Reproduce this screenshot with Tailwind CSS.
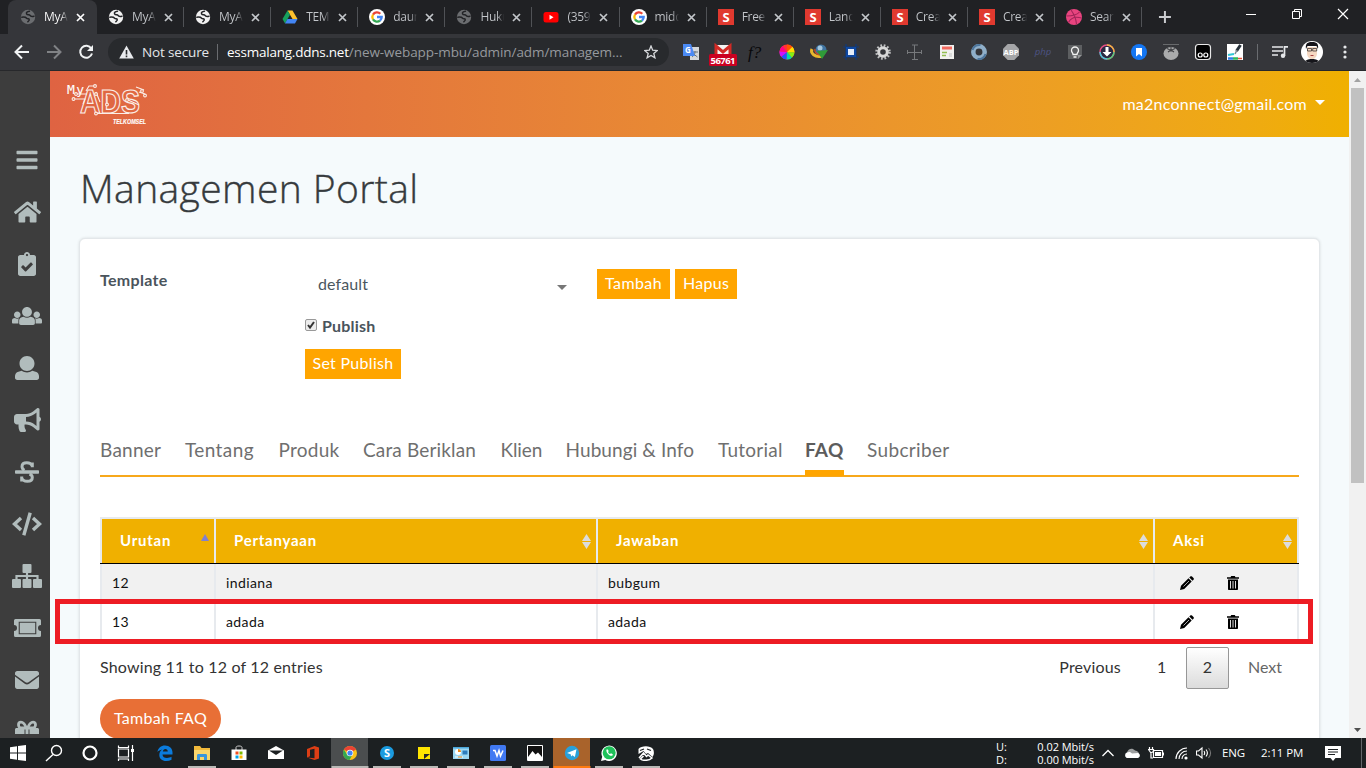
<!DOCTYPE html>
<html lang="id">
<head>
<meta charset="utf-8">
<title>MyAds - Managemen Portal</title>
<script src="https://cdn.jsdelivr.net/npm/@tailwindcss/browser@4"></script>
</head>
<body class="w-[1366px] h-[768px] overflow-hidden flex flex-col font-['Lato',sans-serif] bg-[#f5fafc]">

<!-- shared symbols -->
<svg width="0" height="0" class="absolute">
  <symbol id="globe" viewBox="0 0 16 16"><circle cx="8" cy="8" r="7.200" fill="currentColor"/><path d="M1.800 8.200c2-.2 4 0 4.800 1s2 .2 2.600 1-.6 1.800-1.400 2.600M9.500 2.200C7.400 2.600 5.800 3.200 6.600 4.800s2.800.4 3.400 1.600 2.200 1.200 4 .8" fill="none" stroke="#222326" stroke-width="1.500" stroke-linecap="round"/></symbol>
  <symbol id="drive" viewBox="0 0 16 16"><path d="M5.500 1.500h5l5 8.500h-5z" fill="#fbc02d"/><path d="M5.500 1.500L.5 10 3 14.500l5-8.700z" fill="#17a05d"/><path d="M3 14.500h10l2.500-4.500h-10z" fill="#4285f4"/></symbol>
  <symbol id="google" viewBox="0 0 16 16"><circle cx="8" cy="8" r="8" fill="#fff"/><g fill="none" stroke-width="2.300"><path d="M4 5.600A4.700 4.700 0 0 1 11.300 4.700" stroke="#ea4335"/><path d="M4 10.400A4.700 4.700 0 0 1 4 5.600" stroke="#fbbc05"/><path d="M11 11.600A4.700 4.700 0 0 1 4 10.400" stroke="#34a853"/><path d="M8 8h4.700A4.700 4.700 0 0 1 11 11.600" stroke="#4285f4"/></g></symbol>
  <symbol id="youtube" viewBox="0 0 16 16"><rect x=".5" y="3" width="15" height="10.500" rx="2.500" fill="#f00"/><path d="M6.500 5.800v5l4-2.500z" fill="#fff"/></symbol>
  <symbol id="slides" viewBox="0 0 16 16"><rect width="16" height="16" fill="#e0392f"/><text x="8" y="12.600" font-size="13" font-weight="700" fill="#fff" text-anchor="middle" font-family="Open Sans">S</text></symbol>
  <symbol id="dribbble" viewBox="0 0 16 16"><circle cx="8" cy="8" r="8" fill="#e8447f"/><path d="M5 1c3 4 5 8 5.500 14M.5 7C6 7 11 6 13.500 3M2.500 13.500C5 8.500 10 7.500 15.500 9" fill="none" stroke="#a02558" stroke-width="1.100"/></symbol>
</svg>

<!-- tab strip -->
<header class="h-[34px] shrink-0 bg-[#202124] flex text-[#c3c6ca] font-['Open_Sans',sans-serif] text-[12px]">
  <div class="w-2 shrink-0"></div>
  <div class="w-[89px] shrink-0 h-full bg-[#35363a] rounded-t-lg flex items-center pl-3 text-white">
    <svg class="size-4 text-[#6b6d70]"><use href="#globe"/></svg>
    <span class="ml-2 w-6 overflow-hidden whitespace-nowrap tracking-[-0.3px] bg-linear-to-r from-white from-70% to-transparent bg-clip-text text-transparent">MyA</span>
    <svg class="ml-[8px] size-[9px]" viewBox="0 0 9 9"><path d="M1 1l7 7M8 1L1 8" stroke="#fff" stroke-width="1.700"/></svg>
  </div>
  <div id="tabs" class="flex h-full"></div>
  <svg class="w-11 h-[34px]" viewBox="0 0 44 34"><path d="M23 11v12M17 17h12" stroke="#c9cbce" stroke-width="2"/></svg>
  <div class="flex ml-[42px]">
    <svg class="w-[46px] h-7" viewBox="0 0 46 28"><path d="M18 14.500h10" stroke="#fff"/></svg>
    <svg class="w-[46px] h-7" viewBox="0 0 46 28"><path d="M18.500 11.500h7v7h-7zM20.500 11.500v-2h7v7h-2" stroke="#fff" fill="none"/></svg>
    <svg class="w-[46px] h-7" viewBox="0 0 46 28"><path d="M18 9l10 10M28 9L18 19" stroke="#fff" stroke-width="1.200"/></svg>
  </div>
</header>

<!-- toolbar -->
<div class="h-[37px] shrink-0 bg-[#35363a] border-b border-[#27282b] flex items-center font-['Open_Sans',sans-serif]">
  <svg class="w-[108px] h-9 shrink-0" viewBox="0 0 108 36" fill="none" stroke-width="2">
    <path d="M29 18H16M22 11.500L15.500 18l6.500 6.500" stroke="#f1f3f4"/>
    <path d="M47 18h13M54 11.500L60.500 18 54 24.500" stroke="#808285"/>
    <path d="M91.300 14.500A6 6 0 1 0 92 19.500" stroke="#f1f3f4"/><path d="M93 11v6h-6z" fill="#f1f3f4"/>
  </svg>
  <div class="w-[561px] h-7 shrink-0 rounded-full bg-[#282a2d] flex items-center pl-[11px] text-[13.500px] whitespace-nowrap">
    <svg class="w-[15px] h-[14px]" viewBox="0 0 15 14"><path d="M7.500 .5l7.300 13H.2z" fill="#e8eaed"/><path d="M7.500 5v4.500M7.500 10.500v1.800" stroke="#282a2d" stroke-width="1.600"/></svg>
    <span class="ml-2 text-[#e4e6e9] tracking-[-0.15px]">Not secure</span>
    <i class="ml-[8px] w-px h-4 bg-[#6a6c70]"></i>
    <span class="ml-[9px] text-white tracking-[-0.23px]">essmalang.ddns.net</span><span class="text-[#96999d] tracking-[-0.07px]">/new-webapp-mbu/admin/adm/managem...</span>
    <svg class="ml-auto mr-[11px] size-[14px]" viewBox="0 0 14 14"><path d="M7 1l1.700 4.200 4.600.3-3.500 2.900 1.100 4.400L7 10.400l-3.900 2.400 1.100-4.400L.7 5.500l4.600-.3z" fill="none" stroke="#d7d9dc" stroke-width="1.300"/></svg>
  </div>
  <div class="flex ml-[6px] [&>svg]:w-8 [&>svg]:h-9 [&>svg]:shrink-0">
    <svg viewBox="0 0 32 36"><rect x="15" y="13" width="9" height="13" fill="#d5d7da"/><path d="M17 18h6M20 17v1c0 3-2 4-3 5M18.500 20l4 3" stroke="#65717c" fill="none"/><path d="M8 10h8l4 12H8z" fill="#4b8af4"/><text x="10" y="19" font-size="8" font-weight="700" fill="#fff">G</text></svg>
    <svg viewBox="0 0 32 36"><rect x="8" y="11" width="16" height="12" fill="#f4f4f4"/><path d="M9 22V12l7 6 7-6v10" fill="none" stroke="#d22a25" stroke-width="3"/><rect x="2" y="20" width="28" height="12" rx="1.500" fill="#cb0121"/><text x="16" y="30" font-size="9.500" font-weight="700" fill="#fff" text-anchor="middle" textLength="25">56761</text></svg>
    <svg viewBox="0 0 32 36"><text x="9" y="23.500" font-size="17" font-style="italic" font-family="Liberation Serif" fill="#08080a">f?</text></svg>
    <svg viewBox="0 0 32 36"><g fill="none" stroke-width="7.500" transform="rotate(-90 16 18)"><circle cx="16" cy="18" r="3.800" stroke="#f33"/><g stroke-dasharray="2.980 20.900"><circle cx="16" cy="18" r="3.800" stroke="#f50"/><circle cx="16" cy="18" r="3.800" stroke="#fd0" stroke-dashoffset="-2.980"/><circle cx="16" cy="18" r="3.800" stroke="#8e1" stroke-dashoffset="-5.970"/><circle cx="16" cy="18" r="3.800" stroke="#0da" stroke-dashoffset="-8.950"/><circle cx="16" cy="18" r="3.800" stroke="#25f" stroke-dashoffset="-11.900"/><circle cx="16" cy="18" r="3.800" stroke="#c1f" stroke-dashoffset="-14.900"/><circle cx="16" cy="18" r="3.800" stroke="#f08" stroke-dashoffset="-17.900"/></g></g></svg>
    <svg viewBox="0 0 32 36"><circle cx="18" cy="16" r="5.500" fill="#3f73a0"/><circle cx="17" cy="14" r="2.500" fill="#a5c8df"/><path d="M9 15c-2 4 3 9 10 7" stroke="#e8b62c" stroke-width="3" fill="none"/><path d="M12 15c-1 3 2 6 6 6" stroke="#c44a2a" stroke-width="1.500" fill="none"/><path d="M14 17l11-1-6 9z" fill="#2f9b38"/></svg>
    <svg viewBox="0 0 32 36"><path d="M11 10v16M21 10v16M8 13h16M8 23h16" stroke="#103a7a" stroke-width="1.200"/><rect x="11" y="13" width="10" height="10" fill="#0d47a1"/><rect x="13" y="15" width="6" height="6" fill="#e4edfa"/></svg>
    <svg viewBox="0 0 32 36"><circle cx="16" cy="18" r="6.500" fill="none" stroke="#bfc0c1" stroke-width="2.500" stroke-dasharray="1.700 1.700"/><circle cx="16" cy="18" r="4.300" fill="none" stroke="#d8d8d8" stroke-width="3"/></svg>
    <svg viewBox="0 0 32 36"><path d="M15.500 11v15M13 11h6M13 25.500h6M8 18.500h15M8.500 16v4M22.500 16v4" stroke="#77797c" fill="none"/></svg>
    <svg viewBox="0 0 32 36"><rect x="9" y="11" width="14" height="14" fill="#f1f1ef"/><path d="M11 14h10" stroke="#f26a60" stroke-width="3"/><path d="M11 18.500h5M11 21.500h4" stroke="#93bf52" stroke-width="1.300"/><path d="M18 19h3v4h-3z" fill="#dadada"/></svg>
    <svg viewBox="0 0 32 36"><circle cx="16" cy="18" r="5.700" fill="none" stroke="#8fafc9" stroke-width="4.500"/><path d="M9.500 16a7 7 0 0 1 8-5M22.500 20a7 7 0 0 1-8 5" stroke="#4d769d" stroke-width="2" fill="none"/></svg>
    <svg viewBox="0 0 32 36"><path d="M12.700 10h6.600l4.700 4.700v6.600L19.300 26h-6.600L8 21.300v-6.600z" fill="#a5a6a8"/><text x="16" y="21" font-size="7.500" font-weight="700" text-anchor="middle" fill="#fff">ABP</text></svg>
    <svg viewBox="0 0 32 36"><text x="16" y="21" font-size="9.500" font-style="italic" text-anchor="middle" fill="#4d5486">php</text></svg>
    <svg viewBox="0 0 32 36"><path d="M9 11h14v10l-4 4H9z" fill="#5d5f61"/><path d="M23 21h-4v4z" fill="#929496"/><path d="M14 20.500c0-2-1.500-2-1.500-4a3.500 3.500 0 0 1 7 0c0 2-1.500 2-1.500 4zM14.500 23h3" fill="none" stroke="#f1f1f1" stroke-width="1.300"/></svg>
    <svg viewBox="0 0 32 36"><circle cx="16" cy="18" r="7" fill="#292942" stroke="#e64f83" stroke-width="1.500"/><path d="M16 11a7 7 0 0 1 7 7" stroke="#eeb641" stroke-width="1.500" fill="none"/><path d="M9 18a7 7 0 0 0 7 7" stroke="#4ac7da" stroke-width="1.500" fill="none"/><path d="M23 18a7 7 0 0 1-7 7" stroke="#56ca7d" stroke-width="1.500" fill="none"/><path d="M14.500 13h3v5h3L16 22.500 11.500 18h3z" fill="#fff"/></svg>
    <svg viewBox="0 0 32 36"><circle cx="16" cy="18" r="8" fill="#1476f2"/><path d="M13 14h6v8.500L16 20l-3 2.500z" fill="#fff"/></svg>
    <svg viewBox="0 0 32 36"><path d="M8 10.500h16" stroke="#686a6c"/><ellipse cx="16" cy="19.500" rx="7.500" ry="6.500" fill="#aaabac"/><path d="M12 14.500l4 2 4-2M16 11.500v6M13 18l3-2 3 2" stroke="#424346" stroke-width="1.100" fill="none"/></svg>
    <svg viewBox="0 0 32 36"><rect x="8.500" y="10.500" width="15" height="15" rx="3" fill="#000" stroke="#e8e8e8" stroke-width="1.200"/><circle cx="13.200" cy="21" r="2" fill="none" stroke="#fff" stroke-width="1.200"/><circle cx="18.800" cy="21" r="2" fill="none" stroke="#fff" stroke-width="1.200"/></svg>
    <svg viewBox="0 0 32 36"><rect x="8" y="10" width="16" height="16" fill="#fff"/><path d="M21.500 11l-4 6" stroke="#27313a" stroke-width="3"/><path d="M18 16l-2 4" stroke="#7d8a94" stroke-width="1.500"/><path d="M9 21l6-1" stroke="#32c8d5" stroke-width="2"/><path d="M9 24.500h5" stroke="#2f7de8" stroke-width="2.500"/><path d="M14 24.500h5" stroke="#31b85b" stroke-width="2.500"/><path d="M19 24.500h4" stroke="#e55539" stroke-width="1.500"/></svg>
  </div>
  <i class="ml-1.5 w-px h-4 bg-[#6a6c70]"></i>
  <svg class="ml-3.5 w-4 h-3" viewBox="0 0 16 12"><path d="M0 1h11M0 5h11M0 9h6M12.500 10V.8H16" stroke="#e6e8ea" stroke-width="1.700" fill="none"/><circle cx="11" cy="9.700" r="2.200" fill="#e6e8ea"/></svg>
  <svg class="ml-[13px] size-[22px]" viewBox="0 0 22 22"><clipPath id="av"><circle cx="11" cy="11" r="11"/></clipPath><g clip-path="url(#av)"><path d="M0 0h22v22H0z" fill="#fff"/><path d="M3 22c1-3 4-4 8-4s7 1 8 4z" fill="#15151a"/><path d="M6 6h10v6c0 4-2.500 6-5 6s-5-2-5-6z" fill="#f5d8c2"/><path d="M5 8C4 2 7 1 11 1s7 1 6 7l-1.500-3H6.500z" fill="#15151a"/><path d="M6.500 7.500h4v2.500h-4zM11.700 7.500h4v2.500h-4z" fill="none" stroke="#222" stroke-width=".7"/><path d="M9.500 14.500h3" stroke="#a44"/></g></svg>
  <svg class="ml-5 w-1 h-3.5" viewBox="0 0 4 14" fill="#e6e8ea"><circle cx="2" cy="2" r="1.600"/><circle cx="2" cy="7" r="1.600"/><circle cx="2" cy="12" r="1.600"/></svg>
</div>

<!-- web page -->
<div class="h-[667px] shrink-0 flex relative overflow-hidden">
  <aside class="w-[50px] shrink-0 bg-[#3d3d3d] pt-[63px] overflow-hidden text-[#b1bcbc] flex flex-col items-center [&>svg]:h-6 [&>svg]:my-[14px] [&>svg]:shrink-0 [&>svg]:ml-1">
    <svg viewBox="0 0 448 512" width="22" fill="currentColor"><path d="M16 132h416c8.837 0 16-7.163 16-16V76c0-8.837-7.163-16-16-16H16C7.163 60 0 67.163 0 76v40c0 8.837 7.163 16 16 16zm0 160h416c8.837 0 16-7.163 16-16v-40c0-8.837-7.163-16-16-16H16c-8.837 0-16 7.163-16 16v40c0 8.837 7.163 16 16 16zm0 160h416c8.837 0 16-7.163 16-16v-40c0-8.837-7.163-16-16-16H16c-8.837 0-16 7.163-16 16v40c0 8.837 7.163 16 16 16z"/></svg>
    <svg viewBox="0 0 576 512" width="27" fill="currentColor"><path d="M280.370 148.260L96 300.110V464a16 16 0 0 0 16 16l112.060-.29a16 16 0 0 0 15.920-16V368a16 16 0 0 1 16-16h64a16 16 0 0 1 16 16v95.640a16 16 0 0 0 16 16.050L464 480a16 16 0 0 0 16-16V300L295.670 148.260a12.190 12.190 0 0 0-15.300 0zM571.600 251.470L488 182.560V44.050a12 12 0 0 0-12-12h-56a12 12 0 0 0-12 12v72.610L318.470 43a48 48 0 0 0-61 0L4.340 251.470a12 12 0 0 0-1.600 16.900l25.500 31A12 12 0 0 0 45.150 301l235.220-193.740a12.190 12.190 0 0 1 15.300 0L530.900 301a12 12 0 0 0 16.900-1.600l25.500-31a12 12 0 0 0-1.700-16.930z"/></svg>
    <svg viewBox="0 0 384 512" width="18" fill="currentColor"><path d="M336 64h-80c0-35.300-28.700-64-64-64s-64 28.700-64 64H48C21.500 64 0 85.500 0 112v352c0 26.500 21.500 48 48 48h288c26.500 0 48-21.500 48-48V112c0-26.500-21.500-48-48-48zM192 40c13.300 0 24 10.700 24 24s-10.700 24-24 24-24-10.700-24-24 10.700-24 24-24zm121.200 231.800l-143 141.800c-4.700 4.700-12.300 4.600-17-.1l-82.600-83.300c-4.700-4.700-4.600-12.300.1-17L99.100 285c4.700-4.700 12.300-4.600 17 .1l46 46.400 106-105.200c4.700-4.700 12.300-4.600 17 .1l28.200 28.400c4.700 4.800 4.600 12.300-.1 17z"/></svg>
    <svg viewBox="0 0 640 512" width="30" fill="currentColor"><path d="M320 64c57.990 0 105 47.010 105 105s-47.010 105-105 105-105-47.010-105-105S262.010 64 320 64zm113.463 217.366l-39.982-9.996c-49.168 35.365-108.766 27.473-146.961 0l-39.982 9.996C174.485 289.379 152 318.177 152 351.216V412c0 19.882 16.118 36 36 36h264c19.882 0 36-16.118 36-36v-60.784c0-33.039-22.485-61.837-54.537-69.850zM528 300c38.660 0 70-31.340 70-70s-31.340-70-70-70-70 31.340-70 70 31.340 70 70 70zm-416 0c38.660 0 70-31.340 70-70s-31.340-70-70-70-70 31.340-70 70 31.340 70 70 70zm24 112v-60.784c0-16.551 4.593-32.204 12.703-45.599-29.988 14.720-63.336 8.708-85.690-7.370l-26.655 6.664C14.990 310.252 0 329.452 0 351.477V392c0 13.255 10.745 24 24 24h112.169c-.11-1.323-.169-2.655-.169-4zm467.642-107.090l-26.655-6.664c-27.925 20.086-60.890 19.233-85.786 7.218C499.369 318.893 504 334.601 504 351.216V412c0 1.347-.068 2.678-.169 4H616c13.255 0 24-10.745 24-24v-40.523c0-22.025-14.990-41.225-36.358-46.567z"/></svg>
    <svg viewBox="0 0 512 512" width="24" fill="currentColor"><path d="M256 0c88.366 0 160 71.634 160 160s-71.634 160-160 160S96 248.366 96 160 167.634 0 256 0zm183.283 333.821l-71.313-17.828c-74.923 53.890-165.738 41.864-223.940 0l-71.313 17.828C29.981 344.505 0 382.903 0 426.955V464c0 26.510 21.490 48 48 48h416c26.510 0 48-21.490 48-48v-37.045c0-44.052-29.981-82.450-72.717-93.134z"/></svg>
    <svg viewBox="0 0 576 512" width="27" fill="currentColor"><path d="M576 240c0-23.630-12.950-44.040-32-55.120V32.010C544 23.260 537.020 0 512 0c-7.120 0-14.190 2.380-19.980 7.020l-85.030 68.030C364.280 109.190 310.660 128 256 128H64c-35.350 0-64 28.650-64 64v96c0 35.350 28.650 64 64 64h33.700c-1.390 10.480-2.180 21.140-2.180 32 0 39.770 9.260 77.350 25.560 110.940 5.190 10.690 16.520 17.060 28.400 17.060h74.280c26.050 0 41.690-29.840 25.900-50.560-16.400-21.520-26.150-48.360-26.150-77.440 0-11.110 1.620-21.790 4.410-32H256c54.660 0 108.280 18.810 150.980 52.950l85.030 68.030a32.023 32.023 0 0 0 19.980 7.020c24.920 0 32-22.780 32-32V295.130C563.050 284.040 576 263.630 576 240zm-96 141.420l-33.050-26.440C392.950 311.780 325.120 288 256 288v-96c69.120 0 136.950-23.780 190.950-66.980L480 98.580v282.840z"/></svg>
    <svg viewBox="0 0 24 24" width="24"><rect y="10.300" width="24" height="3.400" rx=".8" fill="currentColor"/><path d="M17.300 7.200V2.400M17.300 5.800C16.200 3.400 14 2.800 11.800 2.800 8.800 2.800 7 4.200 7 6.500c0 1.800 1 3 2.500 3.800M14.500 14c2 .8 2.800 1.900 2.800 3.400 0 2.400-2 3.800-5 3.800-2.700 0-4.900-1-5.600-3.400M6.700 16.400v5" fill="none" stroke="currentColor" stroke-width="3"/></svg>
    <svg viewBox="0 0 30 24" width="30" fill="none" stroke="currentColor" stroke-width="3.400"><path d="M9 6L2.500 12 9 18M21 6l6.500 6L21 18M18.200 .8l-6.400 22.400" stroke-linejoin="miter"/></svg>
    <svg viewBox="0 0 30 24" width="30" fill="currentColor"><rect x="10.500" width="9" height="9" rx="1"/><rect y="15" width="9" height="9" rx="1"/><rect x="10.500" y="15" width="9" height="9" rx="1"/><rect x="21" y="15" width="9" height="9" rx="1"/><path d="M15 8v8M4.500 16v-4h21v4" fill="none" stroke="currentColor" stroke-width="2.200"/></svg>
    <svg viewBox="0 0 27 24" width="27" fill="currentColor"><path fill-rule="evenodd" d="M1.500 3h24A1.500 1.500 0 0 1 27 4.500V9a3 3 0 0 0 0 6v4.500a1.500 1.500 0 0 1-1.500 1.500h-24A1.500 1.500 0 0 1 0 19.500V15a3 3 0 0 0 0-6V4.500A1.500 1.500 0 0 1 1.500 3zM4.700 5.700v12.600h17.600V5.700zM5.800 6.800h15.400v10.400H5.800z"/></svg>
    <svg viewBox="0 0 24 24" width="24" fill="currentColor"><path d="M0 5.200C0 4 1 3 2.200 3h19.600C23 3 24 4 24 5.200v1.500L13.500 14.300c-.8.600-2.200.6-3 0L0 6.700z"/><path d="M0 8.600l9.800 7.200c1.300.9 3.100.9 4.400 0L24 8.600v10.200c0 1.200-1 2.200-2.200 2.200H2.200C1 21 0 20 0 18.800z"/></svg>
    <svg viewBox="0 0 24 24" width="24" fill="currentColor"><path d="M1.500 8h8v6H0V9.500C0 8.700.7 8 1.500 8zM14.500 8h8c.8 0 1.500.7 1.500 1.500V14h-9.500zM10.500 8h3v6h-3z"/><path d="M11.500 8C10 4.500 8 2.200 6 2.200 4.500 2.200 3.500 3.300 3.500 4.700S4.500 8 6 8h12c1.500 0 2.500-1.700 2.500-3.300S19.500 2.200 18 2.200c-2 0-4 2.300-5.500 5.800" fill="none" stroke="currentColor" stroke-width="2.800"/></svg>
  </aside>

  <div class="w-[1299px] shrink-0 flex flex-col">
    <div class="h-[66px] shrink-0 bg-linear-to-r from-[#df6342] to-[#f0b000] flex justify-between items-center pl-4 pr-6">
      <svg class="w-[84px] h-[44px]" viewBox="0 0 84 44" fill="none" stroke="#fbeee8">
        <text x="1" y="12" font-size="13" font-family="DejaVu Sans Mono" stroke-width=".1" fill="#fff" textLength="17">My</text>
        <text x="14" y="31" font-size="34" font-weight="700" font-family="Liberation Sans" textLength="60" lengthAdjust="spacingAndGlyphs" stroke-width="1.200">ADS</text>
        <g stroke-width="1.100"><path d="M28 4h-5l-3 5M11 12h10M9 17h10l-2 5M31 31.500h32M41 14v8M62 18l11 5M70 5l8 3M73 10l6 2M30 10l4 10"/>
        <g fill="#e06a40"><circle cx="29" cy="4" r="1.400"/><circle cx="10" cy="12" r="1.400"/><circle cx="7.500" cy="17" r="1.400"/><circle cx="30" cy="31.500" r="1.400"/><circle cx="41" cy="22.500" r="1.400"/><circle cx="61" cy="18" r="1.400"/><circle cx="76" cy="9" r="1.400"/><circle cx="79" cy="13.500" r="1.400"/><circle cx="30" cy="12" r="1.400"/></g></g>
        <text x="47" y="41.500" font-size="6.500" font-weight="700" font-style="italic" font-family="Liberation Sans" stroke-width=".2" fill="#fff" textLength="33" lengthAdjust="spacingAndGlyphs">TELKOMSEL</text>
      </svg>
      <div class="flex items-center text-white text-[16px] tracking-[0.24px] pb-px">ma2nconnect@gmail.com<i class="ml-2 mb-[3px] border-x-5 border-x-transparent border-t-5 border-t-white"></i></div>
    </div>
    <h1 class="pl-[30px] h-[101px] shrink-0 flex items-center text-[39px] font-light font-['Open_Sans',sans-serif] tracking-[0.4px] text-[#363a3d] pt-px [-webkit-text-stroke:0.4px_#363a3d]">Managemen Portal</h1>

    <div class="ml-[29px] w-[1241px] h-[540px] shrink-0 bg-white rounded-md border border-[#e3e7ea] shadow-[0_0_3px_rgba(0,0,0,0.12)] px-5 text-[16px] text-[#4b5760]">
      <div class="flex pt-[30px]">
        <div class="w-[205px] font-bold tracking-[0.3px] leading-[22px] text-[#4a545c]">Template</div>
        <div class="w-[292px] flex flex-col items-start">
          <div class="w-[262px] h-[31px] flex items-center justify-between pl-[13px] tracking-[0.1px]"><span class="pb-0.5">default</span><i class="mt-1.5 border-x-5 border-x-transparent border-t-5 border-t-[#777]"></i></div>
          <label class="h-6 mt-[14px] flex items-center font-bold tracking-[0.2px] text-[#4a545c]"><svg class="mr-[5px] mb-0.5 size-3" viewBox="0 0 12 12"><rect x=".5" y=".5" width="11" height="11" rx="1.500" fill="#ececec" stroke="#999"/><path d="M3 6l2 2.500L9 3" fill="none" stroke="#333" stroke-width="2"/></svg>Publish</label>
          <button class="mt-[11px] w-24 h-[30px] pb-0.5 bg-[#ffa500] text-white tracking-[0.3px]">Set Publish</button>
        </div>
        <button class="w-[73px] h-[30px] pb-0.5 bg-[#ffa500] text-white tracking-[0.4px]">Tambah</button>
        <button class="ml-[5px] w-[62px] h-[30px] pb-0.5 bg-[#ffa500] text-white tracking-[0.3px]">Hapus</button>
      </div>

      <nav class="mt-[49px] h-[49px] flex items-start pt-2 text-[19px] leading-[28px] text-[#6f6f6f] tracking-[0.25px] border-b-2 border-[#f7a81b] whitespace-nowrap">
        <span class="w-[85px]">Banner</span><span class="w-[93.500px] tracking-[0.4px]">Tentang</span><span class="w-[84.500px]">Produk</span><span class="w-[137.500px] tracking-[0.15px]">Cara Beriklan</span><span class="w-[65px] tracking-[-0.1px]">Klien</span><span class="w-[152.500px] tracking-[0.1px]">Hubungi &amp; Info</span><span class="w-[87px]">Tutorial</span><span class="w-[39px] h-[40px] border-b-6 border-[#ffa500] font-bold text-[#5c5c5c]">FAQ</span><span class="ml-[23px] tracking-[0.35px]">Subcriber</span>
      </nav>

      <div class="mt-10 w-[1199px] border-t-2 border-[#e7eaee] text-[#111] text-[14px]">
        <div class="grid grid-cols-[114px_382px_557px_146px] h-[45px] border-b border-black text-white font-bold text-[15px] tracking-[0.75px] [&>div]:bg-[#f0b000] [&>div]:border-l-2 [&>div]:border-[#e7eaee] [&>div]:pl-[18px] [&>div]:pr-[5px] [&>div]:flex [&>div]:items-center [&>div]:justify-between [&_span]:pb-0.5">
          <div><span>Urutan</span><i class="mb-2 border-x-[4.500px] border-x-transparent border-b-[7px] border-b-[#8080d0]"></i></div>
          <div><span>Pertanyaan</span><svg class="w-[9px] h-[15px]" viewBox="0 0 9 15" fill="#dcdcdc"><path d="M4.500 0L9 7H0zM0 8h9l-4.500 7z"/></svg></div>
          <div><span>Jawaban</span><svg class="w-[9px] h-[15px]" viewBox="0 0 9 15" fill="#dcdcdc"><path d="M4.500 0L9 7H0zM0 8h9l-4.500 7z"/></svg></div>
          <div class="border-r-2"><span>Aksi</span><svg class="w-[9px] h-[15px]" viewBox="0 0 9 15" fill="#dcdcdc"><path d="M4.500 0L9 7H0zM0 8h9l-4.500 7z"/></svg></div>
        </div>
        <div class="grid grid-cols-[114px_382px_557px_146px] h-[39px] bg-[#f1f1f1] tracking-[0.4px] [&>div]:border-l-2 [&>div]:border-[#e7eaee] [&>div]:pl-[10px] [&>div]:pb-0.5 [&>div]:flex [&>div]:items-center">
          <div>12</div><div>indiana</div><div>bubgum</div>
          <div class="border-r-2"><svg class="ml-[15px] size-[14px]" viewBox="0 0 14 14"><path d="M0 14l1-4.200 7.500-7.500 3.200 3.200L4.200 13zM9.300 1.500l1-1c.5-.5 1.200-.5 1.700 0l1.500 1.500c.5.500.5 1.200 0 1.700l-1 1z"/><path d="M3.500 10.500l5.500-5.500" stroke="#f1f1f1" stroke-width=".7"/></svg><svg class="ml-[33px] w-3 h-[14px]" viewBox="0 0 12 14"><path d="M0 1.200h3.500L4.200 0h3.600l.7 1.200H12v1.500H0zM1 3.500h10V13c0 .6-.4 1-1 1H2c-.6 0-1-.4-1-1z"/><path d="M3.500 5v7.500M6 5v7.500M8.500 5v7.500" stroke="#ddd"/></svg></div>
        </div>
        <div class="grid grid-cols-[114px_382px_557px_146px] h-[39px] bg-white tracking-[0.4px] [&>div]:border-l-2 [&>div]:border-[#e7eaee] [&>div]:pl-[10px] [&>div]:pb-0.5 [&>div]:flex [&>div]:items-center">
          <div>13</div><div>adada</div><div>adada</div>
          <div class="border-r-2"><svg class="ml-[15px] size-[14px]" viewBox="0 0 14 14"><path d="M0 14l1-4.200 7.500-7.500 3.200 3.200L4.200 13zM9.300 1.500l1-1c.5-.5 1.200-.5 1.700 0l1.500 1.500c.5.500.5 1.200 0 1.700l-1 1z"/><path d="M3.500 10.500l5.500-5.500" stroke="#fff" stroke-width=".7"/></svg><svg class="ml-[33px] w-3 h-[14px]" viewBox="0 0 12 14"><path d="M0 1.200h3.500L4.200 0h3.600l.7 1.200H12v1.500H0zM1 3.500h10V13c0 .6-.4 1-1 1H2c-.6 0-1-.4-1-1z"/><path d="M3.500 5v7.500M6 5v7.500M8.500 5v7.500" stroke="#ddd"/></svg></div>
        </div>
      </div>

      <div class="mt-[5px] flex h-[42px] items-center text-[#333] tracking-[0.18px]">
        <span class="mr-auto pb-[3px]">Showing 11 to 12 of 12 entries</span>
        <span class="pb-0.5">Previous</span>
        <span class="ml-[36px] w-[10px] pb-0.5">1</span>
        <span class="ml-[19px] w-[43px] h-[42px] pb-0.5 flex items-center justify-center rounded-[2px] border border-[#979797] bg-linear-to-b from-white to-[#dcdcdc]">2</span>
        <span class="ml-[19px] mr-[17px] pb-0.5 text-[#666] tracking-normal">Next</span>
      </div>
      <button class="mt-[10px] w-[121px] h-10 pb-0.5 rounded-full bg-[#e86f36] text-white tracking-[0.3px]">Tambah FAQ</button>
    </div>
  </div>

  <div class="w-[17px] shrink-0 bg-[#f1f1f1] flex flex-col items-center justify-between">
    <svg class="w-[17px] h-[17px]" viewBox="0 0 17 17"><path d="M5 11l3.500-4 3.500 4z" fill="#a3a3a3"/></svg>
    <div class="w-[13px] h-[395px] bg-[#c1c1c1] mb-auto"></div>
    <svg class="w-[17px] h-[17px]" viewBox="0 0 17 17"><path d="M5 7h7l-3.500 4z" fill="#505050"/></svg>
  </div>

  <div class="absolute left-[55px] top-[528px] w-[1258px] h-[45px] border-5 border-[#ed1c24]"></div>
</div>

<!-- taskbar -->
<footer class="h-[30px] shrink-0 bg-[#1c2022] flex text-white font-['Open_Sans',sans-serif] text-[11.500px]">
  <div class="flex w-[146px] shrink-0 [&>svg]:w-9 [&>svg]:h-[30px]">
    <svg viewBox="0 0 36 30" fill="#fff"><path d="M10 9.200l7-1v6.300h-7zM18 8l8-1.100v7.600h-8zM10 15.500h7v6.300l-7-1zM18 15.500h8v7.600L18 22z"/></svg>
    <svg viewBox="0 0 36 30" fill="none" stroke="#fff" stroke-width="1.400"><circle cx="20.500" cy="12.500" r="5"/><path d="M17 16.500l-7 6.500"/></svg>
    <svg viewBox="0 0 36 30" fill="none" stroke="#fff" stroke-width="2.200"><circle cx="18" cy="15" r="6.500"/></svg>
    <svg viewBox="0 0 36 30" fill="none" stroke="#fff" stroke-width="1.200"><path d="M10.500 11h10v8h-10zM10.500 7.500v2h10v-2M10.500 23v-2h10v2M24.500 7v4M24.500 14v9"/><path d="M23 11h3v3h-3z" fill="#fff" stroke="none"/></svg>
  </div>
  <div class="flex [&>div]:w-[37px] [&>div]:h-[30px] [&>div]:flex [&>div]:flex-col [&>div]:items-center [&>div>svg]:size-4 [&>div>svg]:mt-[7px] [&>div>i]:mt-[5px] [&>div>i]:h-[2px] [&>div>i]:w-7 [&>div>i]:bg-[#b9b9b6]">
    <div><svg viewBox="0 0 16 16"><path d="M.5 7C1 3 4 .5 8 .5c4.500 0 7.500 3 7.500 7v2H5.500c0 2.500 2 3.500 4.500 3.500 1.800 0 3.300-.5 4.500-1.200v3c-1.500.8-3.200 1.200-5.200 1.200-4.500 0-7-2.500-7-6 0-2.500 1-4.200 3-5.500C3 5 1.500 5.600.5 7zM5.800 6.500h5c0-1.500-1-2.500-2.400-2.500S6.200 5 5.800 6.500z" fill="#0b7bdc"/></svg></div>
    <div><svg viewBox="0 0 16 16"><path d="M0 1h6l1.500 2H16v12H0z" fill="#f1b93b"/><path d="M0 5h16v10H0z" fill="#fbd66b"/><path d="M3 15v-4.500c0-1 .5-1.500 1.500-1.500h7c1 0 1.500.5 1.500 1.500V15h-3v-3H6v3z" fill="#3a96dd"/></svg><i></i></div>
    <div><svg viewBox="0 0 16 16"><path d="M5 5V2.500C5 1.500 6 1 8 1s3 .5 3 1.500V5" fill="none" stroke="#ccc"/><path d="M.5 4.500h15V15H.5z" fill="#fff"/><path d="M4.500 6.500h3v3h-3z" fill="#f25022"/><path d="M8.500 6.500h3v3h-3z" fill="#7fba00"/><path d="M4.500 10.500h3v3h-3z" fill="#00a4ef"/><path d="M8.500 10.500h3v3h-3z" fill="#ffb900"/></svg></div>
    <div><svg viewBox="0 0 16 16"><path d="M0 5.500L8 1l8 4.500V14H0z" fill="#fff"/><path d="M1 5.500h14L8 10z" fill="#1c2022"/></svg></div>
    <div><svg viewBox="0 0 16 16"><path fill-rule="evenodd" d="M2 4l7.500-3L14 2.500v11L9.500 15 2 12.500l7.500.7V3.700L5 4.800v6.400l-3 1.300z" fill="#dc3e15"/></svg></div>
    <div class="bg-[#4b4e4f]"><svg viewBox="0 0 16 16"><circle cx="8" cy="8" r="7" fill="#fbc116"/><path d="M8 8L1.900 4.500a7 7 0 0 1 12.200 0z" fill="#ea4335"/><path d="M1.900 4.500A7 7 0 0 0 7.500 15L10.500 9.500 5 9.500z" fill="#34a853"/><circle cx="8" cy="8" r="3.300" fill="#fff"/><circle cx="8" cy="8" r="2.600" fill="#4285f4"/></svg><i class="scale-x-[1.32]"></i></div>
    <div><svg viewBox="0 0 16 16"><circle cx="8" cy="8" r="7" fill="#1a9be0"/><text x="8" y="12" font-size="11" font-weight="700" fill="#fff" text-anchor="middle">S</text></svg><i></i></div>
    <div><svg viewBox="0 0 16 16"><path d="M2 2h12v12H2z" fill="#ffe500"/><path d="M8 14v-5h6z" fill="#26282a"/></svg><i></i></div>
    <div><svg viewBox="0 0 16 16"><path d="M0 2h16v12H0z" fill="#9bd7f3"/><path d="M0 2h16v1.500H0z" fill="#4ba6d9"/><circle cx="5" cy="7" r="3" fill="#fff"/><path d="M5 7V4a3 3 0 0 1 3 3z" fill="#e88b20"/><path d="M9.500 5.500h5v4h-5z" fill="#2c7cbd"/><path d="M2 12h8" stroke="#fff"/><path d="M5 12h4" stroke="#e88b20"/></svg><i></i></div>
    <div><svg viewBox="0 0 16 16"><rect width="16" height="16" rx="1.500" fill="#4179f2"/><path d="M3 5.500h2l2 5.500 2-5.500 1.500 5.500 2.500-5.500" fill="none" stroke="#fff" stroke-width="1.500"/></svg><i></i></div>
    <div><svg viewBox="0 0 16 16"><path d="M.5.500h15v15H.5z" fill="#111" stroke="#fff"/><path d="M1 12l4.500-6 3 3.500 2.500-2 4 4.500v3H1z" fill="#fff"/></svg><i></i></div>
    <div class="bg-[#a9632b]"><svg viewBox="0 0 16 16"><circle cx="8" cy="8" r="7.200" fill="#29a0da"/><path d="M3 8l9.500-3.700-1.600 7.700-2.500-1.800-1.300 1.200-.4-2.200z" fill="#fff"/></svg><i class="scale-x-[1.32] !bg-[#ff7a0f]"></i></div>
    <div><svg viewBox="0 0 16 16"><path d="M0 16l1.200-4.300A7.700 7.700 0 1 1 4.300 15z" fill="#fff"/><circle cx="8.200" cy="7.800" r="6.500" fill="#1fc15a"/><path d="M5.500 4.500c-1 3 3.500 7.500 6 6l.3-1.300-1.800-1-1 .8c-1-.4-1.700-1.200-2-2l.7-.8-.8-1.700z" fill="#fff"/></svg><i></i></div>
    <div><svg viewBox="0 0 16 16"><path d="M.5 4C3 .5 12 0 15 4c1.500 3 1 6-.5 8L10 8 8 9 5.500 6 .5 9z" fill="#fff"/><path d="M1 13l4.500-5 3 3.500L10 10l4 3c-3 2.800-9 3-11.500 1L5.500 11" fill="none" stroke="#fff" stroke-width="1.500"/><path d="M2 5.500L6 4M9 4l4 1.500" stroke="#1c2022" stroke-width="1.300" fill="none"/></svg><i></i></div>
  </div>
  <div class="ml-auto w-[370px] flex items-center h-[30px] whitespace-nowrap">
    <div class="text-[11px] leading-[13px] w-3.5">U:<br>D:</div>
    <div class="text-[11px] leading-[13px] w-[84px] text-right tracking-[-0.05px]">0.02 Mbit/s<br>0.00 Mbit/s</div>
    <svg class="ml-2 w-3 h-2" viewBox="0 0 12 8"><path d="M.5 7L6 1.500 11.500 7" fill="none" stroke="#fff" stroke-width="1.300"/></svg>
    <svg class="ml-2.5 w-4 h-3" viewBox="0 0 16 12"><path d="M3 11a3 3 0 0 1 0-5.500C4 2 8 0 11 3.500c3 .5 4 2 4 4z" fill="#9d9fa0"/><path d="M3 11a3 3 0 0 1 0-5.500c2-1 4-.5 5 1L14 6c2.500 1 2.500 4 0 5z" fill="#fff"/></svg>
    <svg class="ml-2 w-4 h-3.5" viewBox="0 0 16 14" fill="none" stroke="#fff" stroke-width="1.200"><path d="M5.500 4.500h9v7h-9z"/><path d="M7 6h6v4H7z" fill="#fff" stroke="none"/><path d="M15.500 6.500v3M1.500 1v2M4.500 1v2M.5 3.500h5v2L3 7zM3 7v5h2"/></svg>
    <svg class="ml-[11px] w-[13px] h-[13px]" viewBox="0 0 13 13" fill="none" stroke="#fff" stroke-width="1.100"><path d="M1 12C1 6 6 1 12 1M4 12c0-4.500 3.500-8 8-8M7 12c0-2.800 2.200-5 5-5"/><circle cx="11" cy="11" r="1.600" fill="#fff" stroke="none"/></svg>
    <svg class="ml-2 w-4 h-3.5" viewBox="0 0 16 14" fill="none" stroke="#fff" stroke-width="1.100"><path d="M.5 5h2L6 2v10L2.500 9h-2zM8 5c.8 1.200.8 2.800 0 4M10 3.500c1.600 2 1.600 5 0 7"/><path d="M12.500 2c2.500 3 2.500 7 0 10" stroke="#777"/></svg>
    <span class="ml-2.5 w-[27px] tracking-[-0.1px]">ENG</span>
    <span class="ml-3 w-[60px] tracking-[-0.1px]">2:11 PM</span>
    <svg class="ml-1 w-4 h-4" viewBox="0 0 16 16"><path d="M0 1h16v12h-5.500L8 16l-2.500-3H0z" fill="#fff"/><path d="M3 4.500h10M3 7h10M3 9.500h7" stroke="#1c2022"/></svg>
    <i class="ml-5 w-px h-full bg-[#62666a]"></i>
  </div>
</footer>

<script>
  const tabs = [['globe','MyA','#f1f1f1'],['globe','MyA','#f1f1f1'],['drive','TEM'],['google','daun'],['globe','Huku','#6b6d70'],['youtube','(359'],['google','midd'],['slides','Free'],['slides','Land'],['slides','Crea'],['slides','Crea'],['dribbble','Sear']];
  document.getElementById('tabs').innerHTML = tabs.map(([icon, label, color]) => `
    <div class="w-[87.100px] h-full shrink-0 flex items-center pl-[11px]">
      <svg class="size-4 shrink-0" style="color:${color || '#fff'}"><use href="#${icon}"/></svg>
      <span class="ml-2 w-6 shrink-0 overflow-hidden whitespace-nowrap tracking-[-0.3px] bg-linear-to-r from-[#c3c6ca] from-70% to-transparent bg-clip-text text-transparent">${label}</span>
      <svg class="ml-[8px] size-[9px] shrink-0" viewBox="0 0 9 9"><path d="M1 1l7 7M8 1L1 8" stroke="#c3c6ca" stroke-width="1.700"/></svg>
      <i class="ml-auto w-px h-5 bg-[#505256]"></i>
    </div>`).join('');
</script>
</body>
</html>
